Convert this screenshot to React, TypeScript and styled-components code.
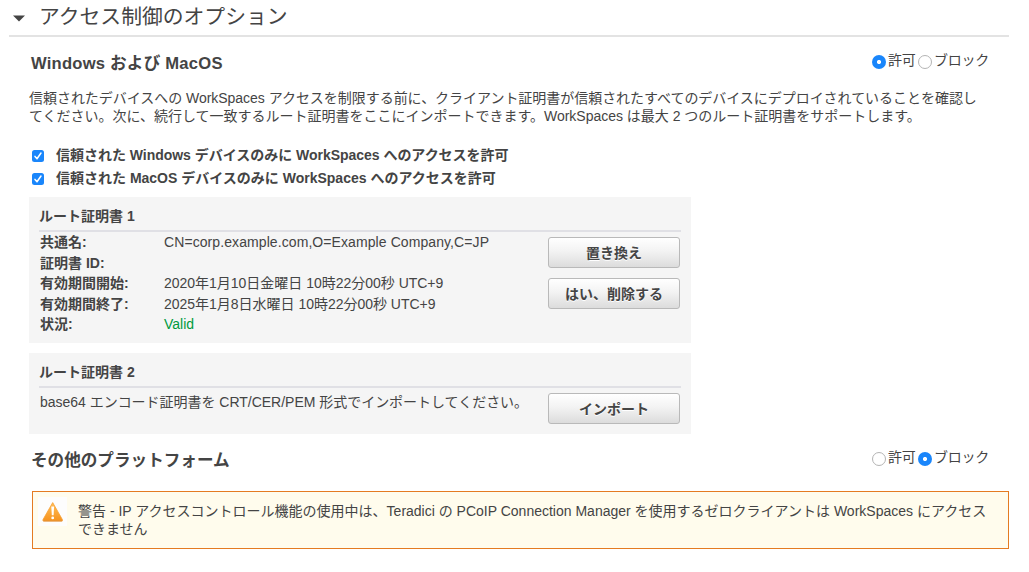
import React, { useState } from "react";
import styled, { createGlobalStyle } from "styled-components";

const GlobalStyle = createGlobalStyle`
  *, *::before, *::after { box-sizing: border-box; }
  body {
    margin: 0;
    background: #fff;
    color: #444;
    font-family: "Liberation Sans", "Noto Sans CJK JP", sans-serif;
    font-size: 14px;
    line-height: 18px;
  }
`;

const Page = styled.main`
  width: 1029px;
  height: 572px;
  padding: 0 20px 0 9px;
  overflow: hidden;
`;

const PanelHeader = styled.header`
  display: flex;
  align-items: center;
  height: 37px;
  padding: 0 0 1px 4px;
  border-bottom: 2px solid #e3e3e3;
`;

const Caret = styled.svg`
  display: block;
  width: 12px;
  height: 7px;
  margin: 2px 14px 0 0;
`;

const PanelTitle = styled.h1`
  margin: 0;
  font-size: 20.8px;
  font-weight: 400;
  line-height: 30px;
  white-space: nowrap;
`;

const SectionHeader = styled.div<{ $top: number }>`
  display: flex;
  justify-content: space-between;
  align-items: flex-start;
  height: 24px;
  margin-top: ${(p) => p.$top}px;
  padding: 0 20px 0 22px;
`;

const SectionTitle = styled.h2<{ $spacing?: number }>`
  margin: 0;
  font-size: 16.6px;
  font-weight: 700;
  line-height: 26px;
  letter-spacing: ${(p) => p.$spacing ?? 0}px;
  white-space: nowrap;
`;

const RadioGroup = styled.div`
  display: flex;
  gap: 2px;
`;

const RadioLabel = styled.label<{ $width: number }>`
  display: flex;
  gap: 2px;
  width: ${(p) => p.$width}px;
  line-height: 18px;
  white-space: nowrap;
`;

const Radio = styled.input`
  appearance: none;
  flex: none;
  width: 14px;
  height: 14px;
  margin: 4px 0 0;
  border: 1px solid #b4b4b4;
  border-radius: 50%;
  background: #fff;
  &:checked {
    border: 0;
    background: radial-gradient(circle, #fff 0 1.7px, #1a86fb 2.4px);
  }
`;

const Line = styled.span<{ $spacing?: number }>`
  display: block;
  white-space: nowrap;
  letter-spacing: ${(p) => p.$spacing ?? 0}px;
`;

const Intro = styled.p`
  margin: 14px 0 0 20px;
`;

const CheckList = styled.div`
  margin: 18px 0 0 23px;
`;

const CheckLabel = styled.label`
  display: flex;
  align-items: center;
  height: 23px;
  gap: 12px;
  font-weight: 700;
`;

const CheckBox = styled.span`
  display: flex;
  position: relative;
  width: 12px;
  height: 12px;
  margin-top: 2px;
  border-radius: 2.5px;
  background: #1a86fb;
  input {
    position: absolute;
    inset: 0;
    margin: 0;
    opacity: 0;
  }
`;

const Card = styled.section<{ $height: number; $top: number }>`
  width: 662px;
  height: ${(p) => p.$height}px;
  margin: ${(p) => p.$top}px 0 0 20px;
  padding: 0 10px;
  background: #f5f5f5;
`;

const CardTitle = styled.h3`
  height: 35px;
  margin: 0;
  padding-top: 4px;
  border-bottom: 2px solid #e0e0e5;
  font-size: 14px;
  line-height: 30px;
`;

const CardBody = styled.div`
  display: flex;
  justify-content: space-between;
  padding: 0 1px;
`;

const Details = styled.dl`
  display: grid;
  grid-template-columns: 124px auto;
  grid-template-rows: 21px 20px 21px 20px 20px;
  margin: 0;
  line-height: 21px;
  white-space: nowrap;
`;

const Term = styled.dt`
  font-weight: 700;
`;

const Value = styled.dd<{ $valid?: boolean; $spacing?: number }>`
  margin: 0;
  color: ${(p) => (p.$valid ? "#009a3d" : "inherit")};
  letter-spacing: ${(p) => p.$spacing ?? 0}px;
`;

const Hint = styled.p`
  margin: 5px 0 0;
`;

const Actions = styled.div`
  display: flex;
  flex-direction: column;
  gap: 10px;
  padding-top: 5px;
`;

const Button = styled.button`
  width: 132px;
  height: 31px;
  padding: 0;
  border: 1px solid #b9b9b9;
  border-radius: 3px;
  background: linear-gradient(#fff, #f3f3f3 45%, #dcdcdc);
  color: #444;
  font: inherit;
  font-weight: 700;
  text-shadow: 0 1px 0 #fff;
`;

const Alert = styled.div`
  display: flex;
  width: 977px;
  height: 58px;
  margin: 19px 0 0 23px;
  padding: 5px 0 0 5px;
  border: 1px solid #e47b22;
  background: #fffced;
`;

const AlertIcon = styled.svg`
  flex: none;
  width: 29px;
  height: 29px;
  margin-right: 11px;
  background: #fdfdfd;
`;

const AlertText = styled.p`
  margin: 5px 0 0;
`;

function AccessChoice({ name, initial }: { name: string; initial: "allow" | "block" }) {
  const [value, setValue] = useState(initial);
  return (
    <RadioGroup>
      <RadioLabel $width={44}>
        <Radio type="radio" name={name} checked={value === "allow"} onChange={() => setValue("allow")} />
        <Line $spacing={-0.25}>許可</Line>
      </RadioLabel>
      <RadioLabel $width={71}>
        <Radio type="radio" name={name} checked={value === "block"} onChange={() => setValue("block")} />
        <Line $spacing={-0.25}>ブロック</Line>
      </RadioLabel>
    </RadioGroup>
  );
}

function TrustedCheck({ children, spacing }: { children: string; spacing: number }) {
  return (
    <CheckLabel>
      <CheckBox>
        <input type="checkbox" defaultChecked />
        <svg width="12" height="12" viewBox="0 0 12 12">
          <path d="M3 6.4 5 8.8 9 3" fill="none" stroke="#fff" strokeWidth="1.5" strokeLinecap="round" strokeLinejoin="round" />
        </svg>
      </CheckBox>
      <Line $spacing={spacing}>{children}</Line>
    </CheckLabel>
  );
}

export default function App() {
  return (
    <Page>
      <GlobalStyle />
      <PanelHeader>
        <Caret viewBox="0 0 12 7">
          <path d="M0 0.5H12L6 6.5Z" fill="#444" />
        </Caret>
        <PanelTitle>アクセス制御のオプション</PanelTitle>
      </PanelHeader>

      <SectionHeader $top={14}>
        <SectionTitle $spacing={0.22}>Windows および MacOS</SectionTitle>
        <AccessChoice name="desktop" initial="allow" />
      </SectionHeader>
      <Intro>
        <Line $spacing={-0.035}>信頼されたデバイスへの WorkSpaces アクセスを制限する前に、クライアント証明書が信頼されたすべてのデバイスにデプロイされていることを確認し</Line>
        <Line $spacing={-0.01}>てください。次に、続行して一致するルート証明書をここにインポートできます。WorkSpaces は最大 2 つのルート証明書をサポートします。</Line>
      </Intro>

      <CheckList>
        <TrustedCheck spacing={-0.025}>信頼された Windows デバイスのみに WorkSpaces へのアクセスを許可</TrustedCheck>
        <TrustedCheck spacing={0}>信頼された MacOS デバイスのみに WorkSpaces へのアクセスを許可</TrustedCheck>
      </CheckList>

      <Card $height={146} $top={8}>
        <CardTitle>ルート証明書 1</CardTitle>
        <CardBody>
          <Details>
            <Term>共通名:</Term>
            <Value $spacing={0.085}>CN=corp.example.com,O=Example Company,C=JP</Value>
            <Term>証明書 ID:</Term>
            <Value />
            <Term>有効期間開始:</Term>
            <Value $spacing={-0.015}>2020年1月10日金曜日 10時22分00秒 UTC+9</Value>
            <Term>有効期間終了:</Term>
            <Value $spacing={-0.015}>2025年1月8日水曜日 10時22分00秒 UTC+9</Value>
            <Term>状況:</Term>
            <Value $valid>Valid</Value>
          </Details>
          <Actions>
            <Button>置き換え</Button>
            <Button>はい、削除する</Button>
          </Actions>
        </CardBody>
      </Card>

      <Card $height={81} $top={10}>
        <CardTitle>ルート証明書 2</CardTitle>
        <CardBody>
          <Hint>
            <Line $spacing={-0.02}>base64 エンコード証明書を CRT/CER/PEM 形式でインポートしてください。</Line>
          </Hint>
          <Actions>
            <Button>インポート</Button>
          </Actions>
        </CardBody>
      </Card>

      <SectionHeader $top={14}>
        <SectionTitle>その他のプラットフォーム</SectionTitle>
        <AccessChoice name="other" initial="block" />
      </SectionHeader>

      <Alert>
        <AlertIcon viewBox="0 0 29 29">
          <defs>
            <linearGradient id="warn" x1="0" y1="0" x2="0" y2="1">
              <stop offset="0" stopColor="#ffc05a" />
              <stop offset="1" stopColor="#f6921e" />
            </linearGradient>
          </defs>
          <path d="M14.7 5.6 24.4 22.6Q25 24 23.6 24H5.8Q4.4 24 5 22.6Z" fill="url(#warn)" stroke="#f8a136" strokeWidth="0.8" strokeLinejoin="round" />
          <path d="M5.3 24H24.2" stroke="#d98a3a" strokeWidth="0.8" />
          <path d="M13.3 9.5H16.1L15.6 18.3H13.8Z" fill="#fff" />
          <circle cx="14.7" cy="20.9" r="1.4" fill="#fff" />
        </AlertIcon>
        <AlertText>
          <Line>警告 - IP アクセスコントロール機能の使用中は、Teradici の PCoIP Connection Manager を使用するゼロクライアントは WorkSpaces にアクセス</Line>
          <Line>できません</Line>
        </AlertText>
      </Alert>
    </Page>
  );
}
